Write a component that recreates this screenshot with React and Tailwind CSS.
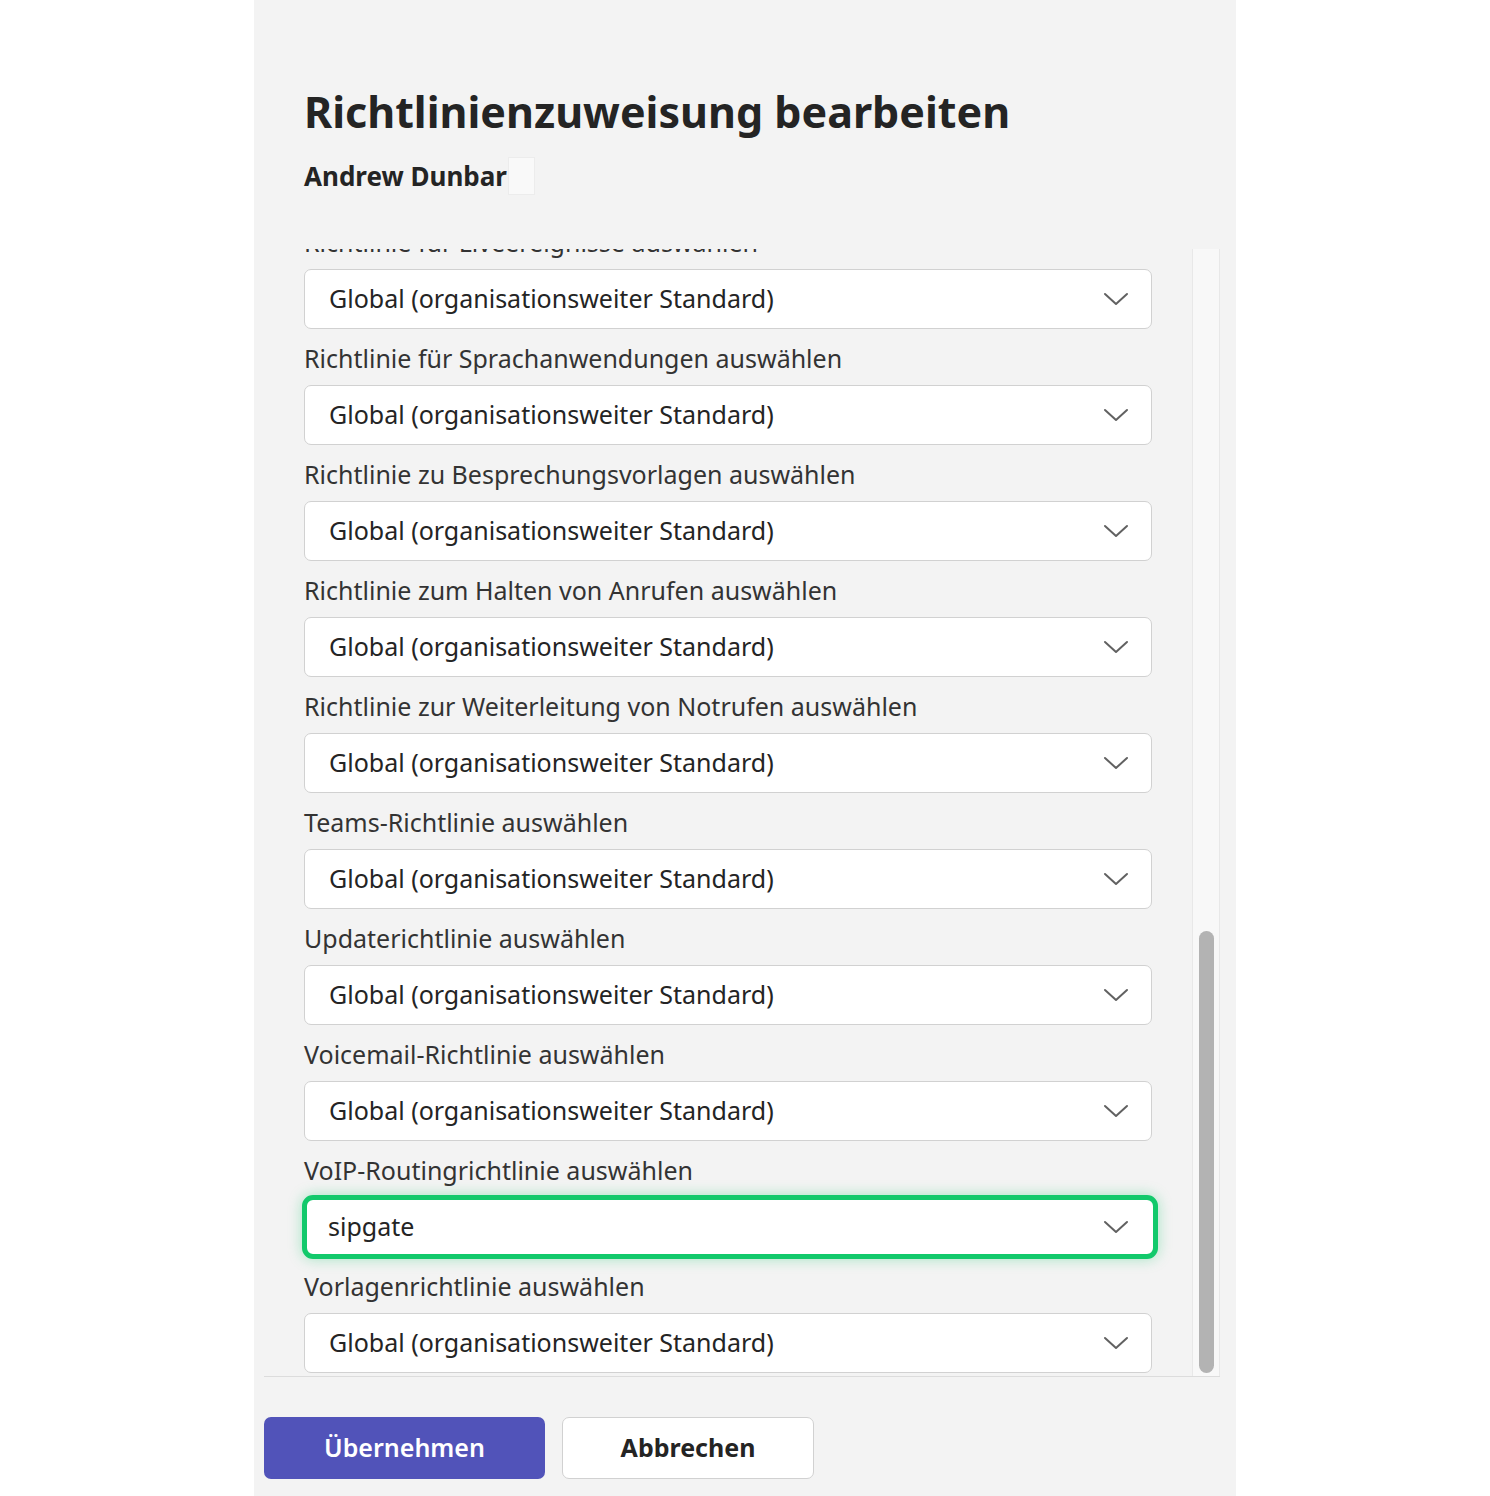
import React from 'react';

const font = { fontFamily: '"Noto Sans", "Open Sans", sans-serif' };

const items = [
  { label: 'Richtlinie für Liveereignisse auswählen', value: 'Global (organisationsweiter Standard)' },
  { label: 'Richtlinie für Sprachanwendungen auswählen', value: 'Global (organisationsweiter Standard)' },
  { label: 'Richtlinie zu Besprechungsvorlagen auswählen', value: 'Global (organisationsweiter Standard)' },
  { label: 'Richtlinie zum Halten von Anrufen auswählen', value: 'Global (organisationsweiter Standard)' },
  { label: 'Richtlinie zur Weiterleitung von Notrufen auswählen', value: 'Global (organisationsweiter Standard)' },
  { label: 'Teams-Richtlinie auswählen', value: 'Global (organisationsweiter Standard)' },
  { label: 'Updaterichtlinie auswählen', value: 'Global (organisationsweiter Standard)' },
  { label: 'Voicemail-Richtlinie auswählen', value: 'Global (organisationsweiter Standard)' },
  { label: 'VoIP-Routingrichtlinie auswählen', value: 'sipgate', active: true },
  { label: 'Vorlagenrichtlinie auswählen', value: 'Global (organisationsweiter Standard)' },
];

const Chevron = () => (
  <svg width="26" height="16" viewBox="0 0 26 16" fill="none" className="shrink-0">
    <path d="M2 3 L13 13 L24 3" stroke="#616161" strokeWidth="2" strokeLinecap="round" strokeLinejoin="round" />
  </svg>
);

const Select = ({ value, active }) =>
  active ? (
    <div className="h-[64px] -ml-[2px] -my-[2px] w-[calc(100%+8px)] rounded-[11px] border-[5px] border-[#12c96b] bg-white shadow-[0_0_14px_rgba(18,201,107,0.35)] flex items-center justify-between pl-[21px] pr-[24px]">
      <span className="text-[25px] text-[#242424]">{value}</span>
      <Chevron />
    </div>
  ) : (
    <div className="h-[60px] rounded-[7px] border border-[#d1d1d1] bg-white flex items-center justify-between pl-[24px] pr-[22px]">
      <span className="text-[25px] text-[#242424]">{value}</span>
      <Chevron />
    </div>
  );

export default function App() {
  return (
    <div className="w-[1490px] h-[1496px] bg-white" style={font}>
      <div className="ml-[254px] w-[982px] h-[1496px] bg-[#f3f3f3] flex flex-col">
        <div className="pl-[50px] pt-[85px]">
          <h1 className="text-[43px] leading-[54px] font-bold text-[#242424]">Richtlinienzuweisung bearbeiten</h1>
          <div className="mt-[18px] flex items-center">
            <span className="text-[26px] leading-[38px] font-bold text-[#242424]">Andrew Dunbar</span>
            <span className="ml-[1px] w-[27px] h-[38px] bg-[#f9f9f9] border border-[#ececec]" />
          </div>
        </div>

        <div className="mt-[54px] ml-[10px] w-[956px] h-[1128px] flex border-b border-[#dcdcdc]">
          <div className="flex-1 overflow-hidden pl-[40px] pr-[40px]">
            <div className="-mt-[36px]">
              {items.map((it) => (
                <div key={it.label}>
                  <div className="h-[56px] flex items-center pt-[4px] text-[25px] text-[#333333]">{it.label}</div>
                  <Select value={it.value} active={it.active} />
                </div>
              ))}
            </div>
          </div>
          <div className="w-[28px] h-full bg-[#f8f8f8] border-l border-r border-[#e8e8e8] flex flex-col">
            <div className="h-[682px]" />
            <div className="ml-[6px] w-[15px] flex-1 mb-[3px] rounded-full bg-[#b3b3b3]" />
          </div>
        </div>

        <div className="ml-[10px] mt-[40px] flex gap-[17px]">
          <button className="w-[281px] h-[62px] rounded-[7px] bg-[#5153b9] text-white text-[25px] font-semibold">Übernehmen</button>
          <button className="w-[252px] h-[62px] rounded-[7px] bg-white border border-[#d1d1d1] text-[#242424] text-[25px] font-bold">Abbrechen</button>
        </div>
      </div>
    </div>
  );
}
